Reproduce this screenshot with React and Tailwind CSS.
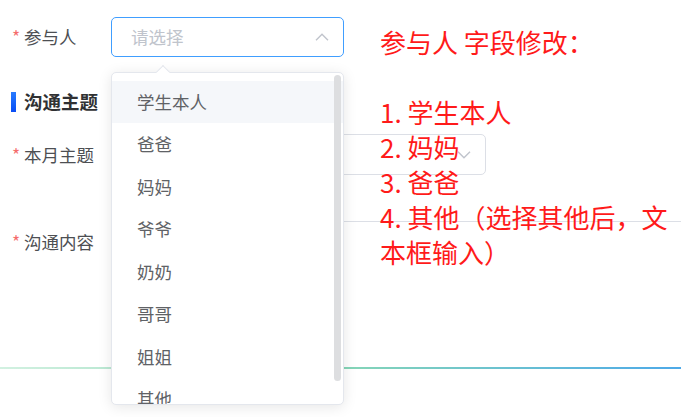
import React from 'react';

const options = ['学生本人', '爸爸', '妈妈', '爷爷', '奶奶', '哥哥', '姐姐', '其他'];

function Chevron({ up }) {
  return (
    <svg width="14" height="8" viewBox="0 0 14 8" fill="none" stroke="#c0c4cc" strokeWidth="1.4">
      {up ? <polyline points="1,7.3 7,1.3 13,7.3" /> : <polyline points="1,0.7 7,6.7 13,0.7" />}
    </svg>
  );
}

function Label({ children, className = '' }) {
  return (
    <label className={`flex w-[99px] shrink-0 items-start text-[17.5px] leading-[24px] text-[#4d4f53] ${className}`}>
      <span className="mr-[4px] inline-block w-[8px] text-[#f56c6c]">*</span>
      {children}
    </label>
  );
}

function App() {
  return (
    <div className="relative h-[417px] w-[681px] overflow-hidden bg-white font-['Noto_Sans_CJK_SC','Noto_Sans',sans-serif]">
      <div className="pl-[12px] pt-[17px]">
        {/* 参与人 */}
        <div className="flex h-[40px] items-center">
          <Label>参与人</Label>
          <div className="relative flex h-[40px] w-[233px] items-center justify-between rounded-[5px] border border-[#409eff] pl-[19px] pr-[14px]">
            <span className="text-[17.5px] text-[#c0c4cc]">请选择</span>
            <Chevron up />

            {/* dropdown */}
            <div className="absolute left-[-1px] top-[54px] z-20 h-[333px] w-[233px] rounded-[5px] border border-[#e4e7ed] bg-white shadow-[0_2px_14px_0_rgba(0,0,0,0.1)]">
              <div className="absolute left-[46px] top-[-6px] h-[10px] w-[10px] rotate-45 border-l border-t border-[#e4e7ed] bg-white" />
              <div className="relative h-full overflow-hidden rounded-[5px]">
                <ul className="pt-[7.5px]">
                  {options.map((o, i) => (
                    <li
                      key={o}
                      className={`flex h-[42.5px] items-center px-[25px] text-[17.5px] text-[#606266] ${i === 0 ? 'bg-[#f5f7fa]' : ''}`}
                    >
                      {o}
                    </li>
                  ))}
                </ul>
                <div className="absolute right-[2px] top-[2px] h-[306px] w-[7px] rounded-full bg-[#dddee0]" />
              </div>
            </div>
          </div>
        </div>

        {/* 沟通主题 */}
        <div className="mt-[35px] flex h-[20px] items-center">
          <div className="ml-[-1px] mr-[8px] h-[20px] w-[5px] bg-gradient-to-b from-[#2a7bff] to-[#0a4cf5]" />
          <span className="text-[18.5px] font-bold text-[#303133]">沟通主题</span>
        </div>

        {/* 本月主题 */}
        <div className="mt-[22px] flex h-[41px] items-center">
          <Label>本月主题</Label>
          <div className="flex h-[41px] w-[375px] items-center justify-end rounded-[5px] border border-[#dcdfe6] pr-[14px]">
            <Chevron />
          </div>
        </div>

        {/* 沟通内容 */}
        <div className="mt-[46px] flex">
          <Label className="pt-[9px]">沟通内容</Label>
          <div className="h-[146px] w-[620px] shrink-0 rounded-t-[5px] border border-b-0 border-[#dcdfe6]" />
        </div>
      </div>

      <div className="h-[2px] w-full bg-gradient-to-r from-[#d2f1e1] via-[#86d6b6] to-[#4ea9e8]" />

      {/* annotation */}
      <div className="absolute left-[380px] top-[24px] z-30 w-[301px] text-[26px] leading-[35px] text-[#ff1a1a]">
        <div>参与人 字段修改：</div>
        <div className="h-[35px]" />
        <div>1. 学生本人</div>
        <div>2. 妈妈</div>
        <div>3. 爸爸</div>
        <div>4. 其他（选择其他后，文本框输入）</div>
      </div>
    </div>
  );
}

export default App;
